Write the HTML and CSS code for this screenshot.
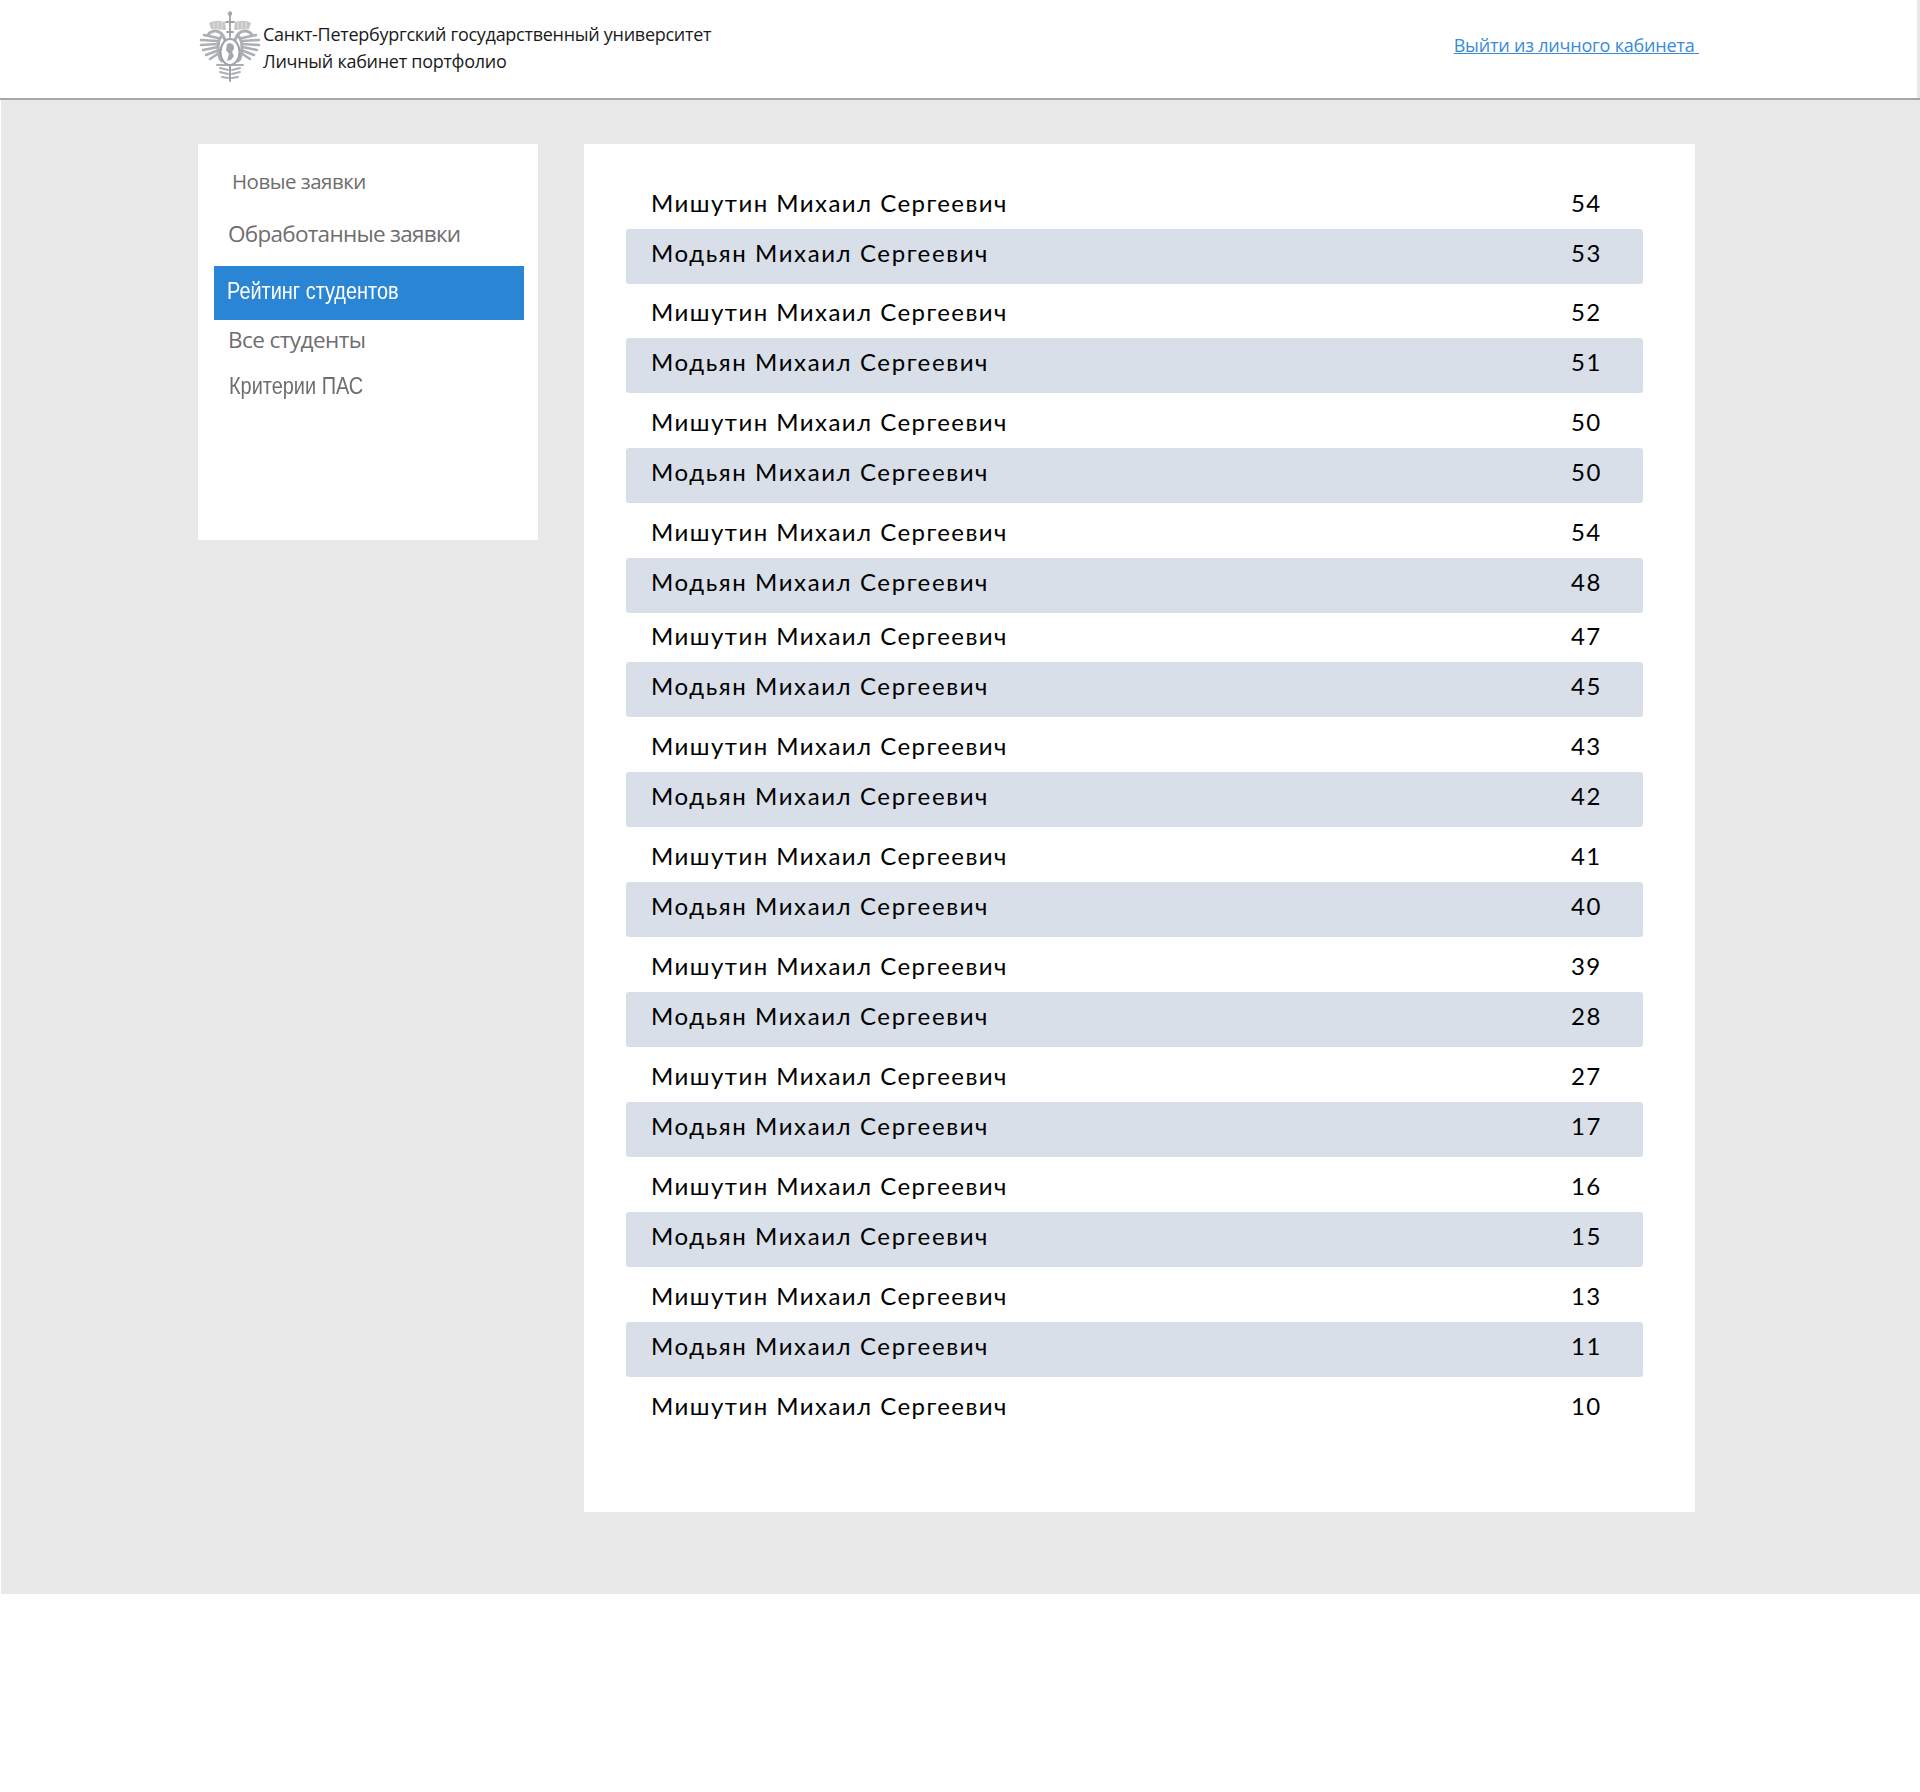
FILE: index.html
```html
<!DOCTYPE html>
<html lang="ru">
<head>
<meta charset="utf-8">
<title>Рейтинг студентов</title>
<link rel="stylesheet" href="styles.css">
</head>
<body>
<header class="topbar">
  <div class="topbar-inner">
    <div class="brand">
      <svg class="crest" viewBox="0 0 64 72" aria-hidden="true">
        <defs>
          <g id="crest-half" fill="none" stroke="#adb0b2" stroke-linecap="round">
            <g stroke-width="2.600">
              <path d="M20 28 6 25"/>
              <path d="M20 31 3 30"/>
              <path d="M20 34 3 35"/>
              <path d="M20 37 5 40"/>
              <path d="M21 40 8 45"/>
              <path d="M21 43 12 49"/>
            </g>
            <path d="M24 26C19 30 19 42 22 49L24 51" stroke-width="3"/>
            <path d="M27 30C25 24 22 21 17 21 14 21 12 22 10 25" stroke-width="3"/>
            <path d="M11 13Q16 10 22 11L27 12 28 20 13 19Z" fill="#c4c6c8" stroke="none"/>
            <path d="M16 12V19M20 12V19M24 12V19" stroke="#e6e7e8" stroke-width="0.900"/>
            <path d="M19 55H30" stroke-width="2"/>
            <path d="M30 60 22 58M30 64 22 62M30 68 24 67" stroke-width="2"/>
          </g>
        </defs>
        <use href="#crest-half"/>
        <use href="#crest-half" transform="matrix(-1 0 0 1 64 0)"/>
        <g fill="none" stroke="#9fa2a4" stroke-linecap="round">
          <circle cx="32" cy="3.500" r="2.200" fill="#a5a8aa" stroke="none"/>
          <path d="M32 5V27M28 12h8M29 22h6" stroke-width="1.800"/>
          <path d="M32 55V71" stroke-width="2"/>
          <ellipse cx="32" cy="42" rx="9.500" ry="13" fill="#fff" stroke-width="2"/>
          <path d="M29 34C32 32 37 34 36 39L34 42 36 46 33 50 29 51 31 44 28 40Z" fill="#a5a8aa" stroke="none"/>
        </g>
      </svg>
      <div class="brand-text">
        <div>Санкт-Петербургский государственный университет</div>
        <div>Личный кабинет портфолио</div>
      </div>
    </div>
    <a class="logout" href="#">Выйти из личного кабинета&nbsp;</a>
  </div>
</header>
<main class="stage">
  <nav class="side">
    <a class="side-new" href="#">Новые заявки</a>
    <a class="side-done" href="#">Обработанные заявки</a>
    <a class="side-active" href="#"><span class="narrow">Рейтинг студентов</span></a>
    <a class="side-all" href="#">Все студенты</a>
    <a class="side-crit" href="#"><span class="narrow">Критерии ПАС</span></a>
  </nav>
  <section class="panel">
    <div class="row first">Мишутин Михаил Сергеевич<span>54</span></div>
    <div class="row alt">Модьян Михаил Сергеевич<span>53</span></div>
    <div class="row first">Мишутин Михаил Сергеевич<span>52</span></div>
    <div class="row alt">Модьян Михаил Сергеевич<span>51</span></div>
    <div class="row">Мишутин Михаил Сергеевич<span>50</span></div>
    <div class="row alt">Модьян Михаил Сергеевич<span>50</span></div>
    <div class="row">Мишутин Михаил Сергеевич<span>54</span></div>
    <div class="row alt">Модьян Михаил Сергеевич<span>48</span></div>
    <div class="row short">Мишутин Михаил Сергеевич<span>47</span></div>
    <div class="row alt">Модьян Михаил Сергеевич<span>45</span></div>
    <div class="row">Мишутин Михаил Сергеевич<span>43</span></div>
    <div class="row alt">Модьян Михаил Сергеевич<span>42</span></div>
    <div class="row">Мишутин Михаил Сергеевич<span>41</span></div>
    <div class="row alt">Модьян Михаил Сергеевич<span>40</span></div>
    <div class="row">Мишутин Михаил Сергеевич<span>39</span></div>
    <div class="row alt">Модьян Михаил Сергеевич<span>28</span></div>
    <div class="row">Мишутин Михаил Сергеевич<span>27</span></div>
    <div class="row alt">Модьян Михаил Сергеевич<span>17</span></div>
    <div class="row">Мишутин Михаил Сергеевич<span>16</span></div>
    <div class="row alt">Модьян Михаил Сергеевич<span>15</span></div>
    <div class="row">Мишутин Михаил Сергеевич<span>13</span></div>
    <div class="row alt">Модьян Михаил Сергеевич<span>11</span></div>
    <div class="row">Мишутин Михаил Сергеевич<span>10</span></div>
  </section>
</main>
</body>
</html>
```
FILE: styles.css
```css
* { box-sizing: border-box; }
html, body { margin: 0; padding: 0; background: #fff; }
body { height: 1792px; overflow: hidden; }

.topbar {
  height: 100px;
  border-bottom: 2px solid #a6a6a6;
  background: #e8e8e8;
}
.topbar-inner {
  height: 98px;
  margin-right: 3px;
  background: #fff;
  padding: 10px 218px 0 198px;
  display: flex;
  justify-content: space-between;
  align-items: flex-start;
}
.brand { display: flex; align-items: flex-start; gap: 1px; }
.crest { width: 64px; height: 72px; filter: blur(0.4px); }
.brand-text {
  font-family: "Open Sans", sans-serif;
  font-size: 18px;
  letter-spacing: -0.28px;
  line-height: 27px;
  color: #1a1a1a;
  padding-top: 11px;
}
.logout {
  font-family: "Open Sans", sans-serif;
  font-size: 18px;
  letter-spacing: -0.2px;
  line-height: 24px;
  color: #3a8bd8;
  text-decoration: underline;
  margin-top: 23px;
}

.stage {
  height: 1494px;
  margin-left: 1px;
  background: #e8e8e8;
  padding: 44px 0 0 197px;
  display: flex;
  align-items: flex-start;
  gap: 46px;
}
.side {
  width: 340px;
  height: 396px;
  background: #fff;
  padding: 0 14px 0 16px;
  display: flex;
  flex-direction: column;
}
.side a { color: #6e6e6e; display: block; text-decoration: none; font-family: "Open Sans", sans-serif; }
.side .side-new { font-size: 20.500px; letter-spacing: -0.5px; line-height: 28px; margin: 23px 0 0 18px; }
.side .side-done { font-size: 22.500px; letter-spacing: -0.72px; line-height: 32px; margin: 23px 0 0 14px; }
.side .side-active {
  font-family: "Liberation Sans", sans-serif;
  font-size: 24px;
  line-height: 50px;
  height: 54px;
  margin-top: 16px;
  padding-left: 13px;
  background: #2b85d5;
  color: #fff;
}
.side .side-all { font-size: 22.500px; letter-spacing: -0.55px; line-height: 30px; margin: 5px 0 0 14px; }
.side .side-crit { font-family: "Liberation Sans", sans-serif; font-size: 24px; line-height: 30px; margin: 16px 0 0 15px; }
.narrow { display: inline-block; transform: scaleX(0.83); transform-origin: left center; white-space: nowrap; }

.panel {
  width: 1111px;
  height: 1368px;
  background: #fff;
  padding: 31px 52px 0 42px;
  font-family: Lato, sans-serif;
  font-size: 24px;
  letter-spacing: 1.45px;
  color: #000;
}
.row {
  height: 55px;
  line-height: 34px;
  padding: 0 41px 9px 25px;
  display: flex;
  justify-content: space-between;
  align-items: flex-end;
}
.row span { width: 31px; }
.row.first { height: 54px; }
.row.short { height: 49px; }
.row.alt {
  height: 55px;
  padding-top: 7px;
  padding-bottom: 14px;
  align-items: flex-start;
  letter-spacing: 1.6px;
  background: #d8dfe9;
  border-radius: 3px;
}
```
